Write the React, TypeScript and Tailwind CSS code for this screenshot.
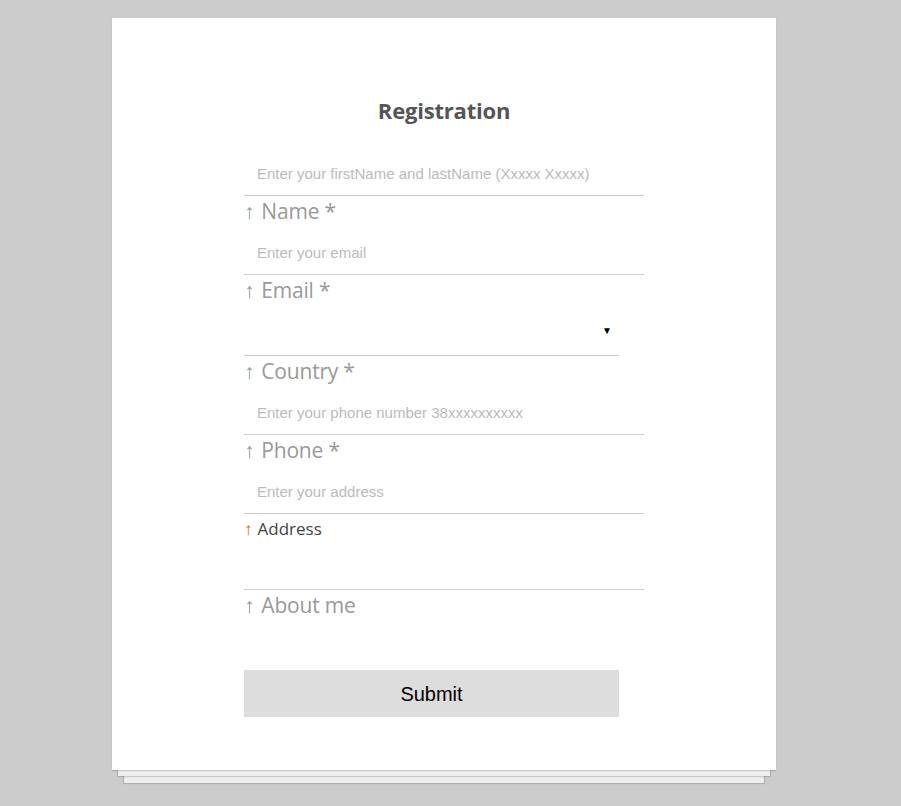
import type { ReactNode } from "react";

const label = "flex items-start h-[35px] pt-[1px] text-[21px] leading-[28px] text-[#999] font-['Open_Sans',sans-serif] tracking-[-0.2px]";
const field =
  "block w-[400px] h-[44px] border-0 border-b border-[#ccc] bg-transparent pl-[13px] pr-2 text-[15px] text-[#333] outline-none placeholder:text-[#bbb] font-['Liberation_Sans',Arial,sans-serif]";

function Label({ children, active }: { children: ReactNode; active?: boolean }) {
  return (
    <label
      className={
        active
          ? "flex items-start h-[35px] pt-[3px] text-[17px] leading-[24px] text-[#444] font-['Open_Sans',sans-serif]"
          : label
      }
    >
      <span className={active ? "mr-[5px] text-[#c8641e]" : "mr-[7px] text-[#8797ab]"}>↑</span>
      {children}
    </label>
  );
}

export default function App() {
  return (
    <div className="min-h-[806px] w-full bg-[#ccc] pt-[18px]">
      <div className="ml-[112px] w-[664px] bg-white pt-[78px] pb-[53px] shadow-[0_1px_1px_rgba(0,0,0,0.15),0_12px_0_-6px_#eee,0_12px_1px_-5px_rgba(0,0,0,0.15),0_25px_0_-12px_#eee,0_25px_1px_-11px_rgba(0,0,0,0.15)]">
        <h1 className="text-center text-[22px] font-bold leading-[28px] text-[#555] font-['Open_Sans',sans-serif] tracking-[-0.2px]">
          Registration
        </h1>
        <form className="ml-[132px] mt-[28px] flex flex-col" onSubmit={(e) => e.preventDefault()}>
          <input className={field} placeholder="Enter your firstName and lastName (Xxxxx Xxxxx)" />
          <Label>Name *</Label>
          <input className={field} placeholder="Enter your email" />
          <Label>Email *</Label>
          <div className="relative w-[375px]">
            <select className="block h-[46px] w-[375px] appearance-none border-0 border-b border-[#ccc] bg-transparent outline-none" />
            <span className="pointer-events-none absolute right-[7px] top-[13px] text-[10px] text-black">▼</span>
          </div>
          <Label>Country *</Label>
          <input className={field} placeholder="Enter your phone number 38xxxxxxxxxx" />
          <Label>Phone *</Label>
          <input className={field} placeholder="Enter your address" />
          <Label active>Address</Label>
          <textarea className="block h-[41px] w-[400px] resize-none border-0 border-b border-[#ccc] bg-transparent outline-none" />
          <Label>About me</Label>
          <button
            type="submit"
            className="mt-[45px] h-[47px] w-[375px] bg-[#ddd] text-[20px] text-black font-['Liberation_Sans',Arial,sans-serif]"
          >
            Submit
          </button>
        </form>
      </div>
    </div>
  );
}
